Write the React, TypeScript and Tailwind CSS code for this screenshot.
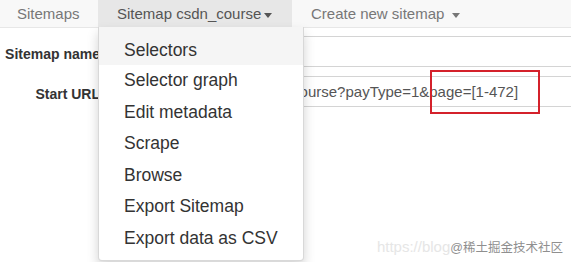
import React from 'react';

const menuItems = [
  'Selectors',
  'Selector graph',
  'Edit metadata',
  'Scrape',
  'Browse',
  'Export Sitemap',
  'Export data as CSV',
];

function Caret() {
  return <span className="inline-block ml-[3px] align-middle w-0 h-0 border-t-[5px] border-t-current border-x-[4px] border-x-transparent" />;
}

export default function App() {
  return (
    <div className="relative w-[571px] h-[262px] overflow-hidden bg-white font-['Liberation_Sans',Arial,sans-serif]">
      {/* Navbar */}
      <nav className="flex h-[28px] bg-[#f8f8f8] border-b border-[#e7e7e7] text-[15px] leading-[27px]">
        <div className="w-[98px] pl-[17px] text-[#777]">Sitemaps</div>
        <div className="w-[194px] pl-[19px] bg-[#e7e7e7] text-[#555]">
          Sitemap csdn_course
          <Caret />
        </div>
        <div className="pl-[19px] text-[#777]">
          Create new sitemap <Caret />
        </div>
      </nav>

      {/* Form */}
      <div className="pt-[8px] flex flex-col gap-[6px]">
        <div className="flex">
          <label className="w-[100px] shrink-0 text-right text-[14px] font-bold text-[#333] leading-[31px] pt-[3px]">
            Sitemap name
          </label>
          <div className="ml-[12px] flex-1 h-[31px] border border-[#d4d4d4] border-r-0" />
        </div>
        <div className="flex">
          <label className="w-[100px] shrink-0 text-right text-[14px] font-bold text-[#333] leading-[31px] pt-[3px]">
            Start URL
          </label>
          <div className="ml-[12px] flex-1 h-[31px] border border-[#d4d4d4] border-r-0 pl-[44px] text-[15px] leading-[29px] text-[#555] whitespace-nowrap overflow-hidden">
            https://edu.csdn.net/course?payType=1&amp;page=[1-472]
          </div>
        </div>
      </div>

      {/* Annotation */}
      <div className="absolute left-[430px] top-[70px] w-[110px] h-[44px] border-2 border-[#d4212b]" />

      {/* Dropdown */}
      <div className="absolute left-[98px] top-[27px] w-[206px] h-[234px] bg-white border border-black/15 border-t-0 rounded-b-[4px] shadow-[0_6px_12px_rgba(0,0,0,0.175)]">
        <ul className="text-[17.5px] text-[#333]">
          {menuItems.map((item, i) => (
            <li
              key={item}
              className={i === 0 ? 'pl-[25px] pt-[7.5px] h-[38px] leading-[31.6px] bg-[#f5f5f5]' : 'pl-[25px] leading-[31.6px]'}
            >
              {item}
            </li>
          ))}
        </ul>
      </div>

      {/* Watermark */}
      <div className="absolute right-[8px] top-[236px] flex items-baseline whitespace-nowrap">
        <span className="text-[15px] text-[#e6e6e6]">https://blog</span>
        <span className="text-[12.5px] text-[#8f8f8f] font-['Liberation_Sans','Noto_Sans_CJK_SC',sans-serif]">@稀土掘金技术社区</span>
      </div>
    </div>
  );
}
